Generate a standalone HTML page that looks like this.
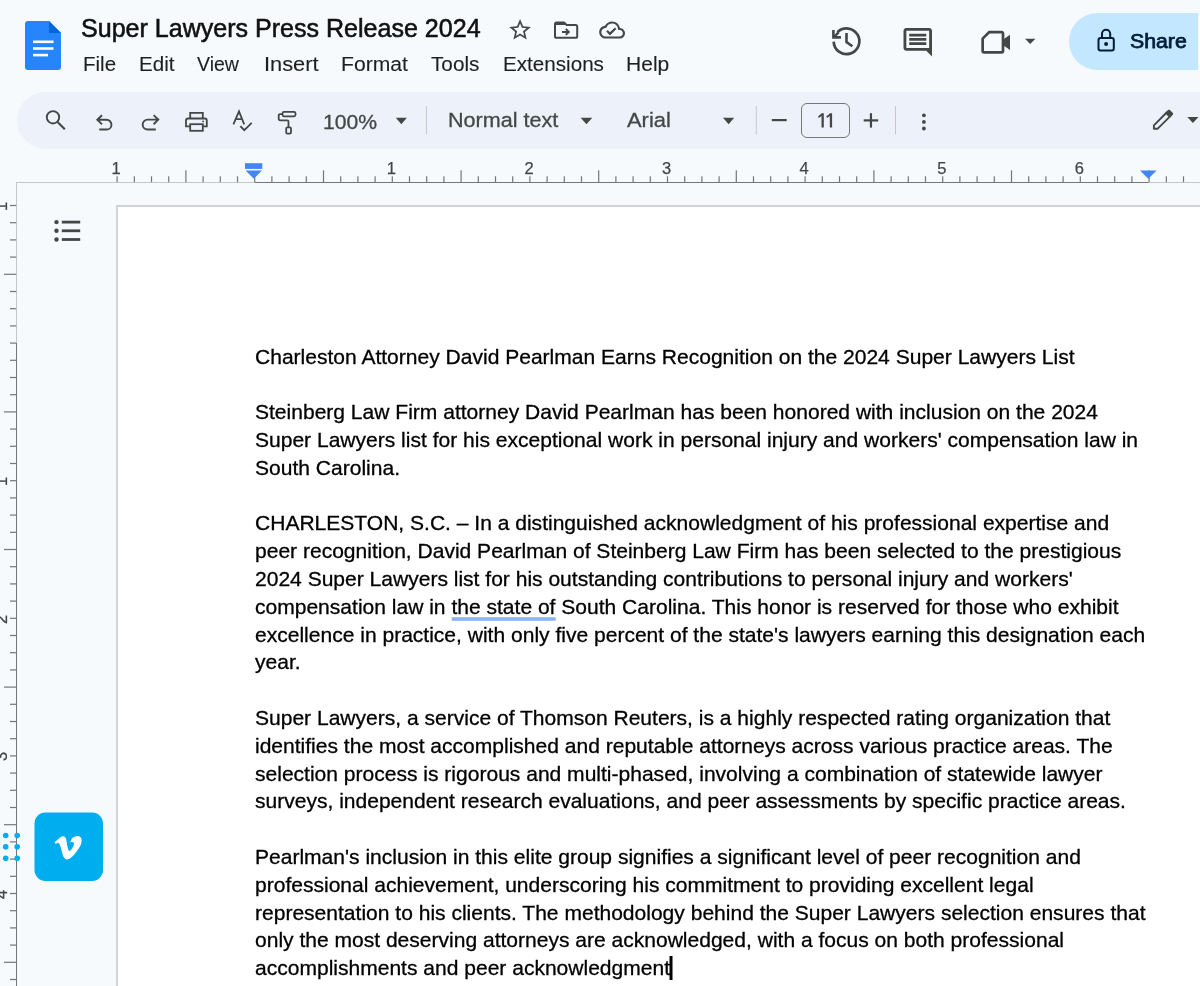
<!DOCTYPE html>
<html><head><meta charset="utf-8">
<style>
*{margin:0;padding:0;box-sizing:border-box}
html,body{width:1200px;height:986px;overflow:hidden;background:#f7fafd;font-family:"Liberation Sans",sans-serif}
#root{position:absolute;left:0;top:0;width:1200px;height:986px;will-change:transform}
.a{position:absolute}
.t{white-space:pre}
.ln{position:absolute;left:255px;font-size:21.04px;line-height:24px;color:#000;white-space:pre;-webkit-text-stroke:0.3px #000}
svg.ov{position:absolute;left:0;top:0}
</style></head><body><div id="root">

<div class="a" style="left:17px;top:92px;width:1400px;height:57px;background:#edf2fa;border-radius:28.5px"></div>
<div class="a" style="left:1069px;top:13px;width:129px;height:57px;background:#c2e7ff;border-radius:28.5px 0 0 28.5px"></div>
<div class="a" style="left:1198.5px;top:14px;width:4px;height:57px;background:#fff"></div>
<div class="a" style="left:116px;top:205px;width:1200px;height:900px;background:#fff;border:2px solid #d3d3d3"></div>
<div class="a t" style="left:80.90px;top:12.84px;font-size:25px;line-height:30px;color:#111;-webkit-text-stroke:0.55px #111;transform:scaleX(1.0019);transform-origin:0 0;">Super Lawyers Press Release 2024</div>
<div class="a t" style="left:82.85px;top:52.07px;font-size:20px;line-height:24px;color:#1f1f1f;-webkit-text-stroke:0.12px #1f1f1f;transform:scaleX(1.0278);transform-origin:0 0;">File</div>
<div class="a t" style="left:138.60px;top:52.07px;font-size:20px;line-height:24px;color:#1f1f1f;-webkit-text-stroke:0.12px #1f1f1f;transform:scaleX(1.0292);transform-origin:0 0;">Edit</div>
<div class="a t" style="left:197.10px;top:52.07px;font-size:20px;line-height:24px;color:#1f1f1f;-webkit-text-stroke:0.12px #1f1f1f;transform:scaleX(0.9754);transform-origin:0 0;">View</div>
<div class="a t" style="left:263.60px;top:52.07px;font-size:20px;line-height:24px;color:#1f1f1f;-webkit-text-stroke:0.12px #1f1f1f;transform:scaleX(1.0903);transform-origin:0 0;">Insert</div>
<div class="a t" style="left:340.80px;top:52.07px;font-size:20px;line-height:24px;color:#1f1f1f;-webkit-text-stroke:0.12px #1f1f1f;transform:scaleX(1.0558);transform-origin:0 0;">Format</div>
<div class="a t" style="left:430.60px;top:52.07px;font-size:20px;line-height:24px;color:#1f1f1f;-webkit-text-stroke:0.12px #1f1f1f;transform:scaleX(1.0358);transform-origin:0 0;">Tools</div>
<div class="a t" style="left:502.60px;top:52.07px;font-size:20px;line-height:24px;color:#1f1f1f;-webkit-text-stroke:0.12px #1f1f1f;transform:scaleX(1.0317);transform-origin:0 0;">Extensions</div>
<div class="a t" style="left:626.10px;top:52.07px;font-size:20px;line-height:24px;color:#1f1f1f;-webkit-text-stroke:0.12px #1f1f1f;transform:scaleX(1.0519);transform-origin:0 0;">Help</div>
<div class="a t" style="left:1130.10px;top:28.87px;font-size:20px;line-height:24px;color:#001d35;-webkit-text-stroke:0.75px #001d35;transform:scaleX(1.0641);transform-origin:0 0;">Share</div>
<div class="a t" style="left:323.20px;top:108.70px;font-size:20.5px;line-height:25px;color:#444746;-webkit-text-stroke:0.3px #444746;transform:scaleX(1.0320);transform-origin:0 0;">100%</div>
<div class="a t" style="left:447.90px;top:107.40px;font-size:20.5px;line-height:25px;color:#444746;-webkit-text-stroke:0.3px #444746;transform:scaleX(1.0527);transform-origin:0 0;">Normal text</div>
<div class="a t" style="left:626.90px;top:107.40px;font-size:20.5px;line-height:25px;color:#444746;-webkit-text-stroke:0.3px #444746;transform:scaleX(1.0692);transform-origin:0 0;">Arial</div>
<div class="a" style="left:801.3px;top:103px;width:49px;height:34.5px;border:1.8px solid #747775;border-radius:6px"></div>
<div class="ln" style="top:345px">Charleston Attorney David Pearlman Earns Recognition on the 2024 Super Lawyers List</div>
<div class="ln" style="top:400px">Steinberg Law Firm attorney David Pearlman has been honored with inclusion on the 2024</div>
<div class="ln" style="top:428px">Super Lawyers list for his exceptional work in personal injury and workers' compensation law in</div>
<div class="ln" style="top:456px">South Carolina.</div>
<div class="ln" style="top:511px">CHARLESTON, S.C. – In a distinguished acknowledgment of his professional expertise and</div>
<div class="ln" style="top:539px">peer recognition, David Pearlman of Steinberg Law Firm has been selected to the prestigious</div>
<div class="ln" style="top:567px">2024 Super Lawyers list for his outstanding contributions to personal injury and workers'</div>
<div class="ln" style="top:595px">compensation law in the state of South Carolina. This honor is reserved for those who exhibit</div>
<div class="ln" style="top:623px">excellence in practice, with only five percent of the state's lawyers earning this designation each</div>
<div class="ln" style="top:650px">year.</div>
<div class="ln" style="top:706px">Super Lawyers, a service of Thomson Reuters, is a highly respected rating organization that</div>
<div class="ln" style="top:734px">identifies the most accomplished and reputable attorneys across various practice areas. The</div>
<div class="ln" style="top:762px">selection process is rigorous and multi-phased, involving a combination of statewide lawyer</div>
<div class="ln" style="top:789px">surveys, independent research evaluations, and peer assessments by specific practice areas.</div>
<div class="ln" style="top:845px">Pearlman's inclusion in this elite group signifies a significant level of peer recognition and</div>
<div class="ln" style="top:873px">professional achievement, underscoring his commitment to providing excellent legal</div>
<div class="ln" style="top:901px">representation to his clients. The methodology behind the Super Lawyers selection ensures that</div>
<div class="ln" style="top:928px">only the most deserving attorneys are acknowledged, with a focus on both professional</div>
<div class="ln" style="top:956px">accomplishments and peer acknowledgment</div>
<svg class="ov" width="1200" height="986" viewBox="0 0 1200 986"><path d="M28 21H49L61 33V67A3 3 0 0 1 58 70H28A3 3 0 0 1 25 67V24A3 3 0 0 1 28 21Z" fill="#2684fc"/><path d="M49 21L61 33H49Z" fill="#0066da"/><rect x="33" y="40.5" width="20.5" height="2.6" fill="#fff"/><rect x="33" y="47.2" width="20.5" height="2.6" fill="#fff"/><rect x="33" y="53.8" width="15" height="2.6" fill="#fff"/><g transform="translate(507.1,16.9) scale(1.08)" fill="#444746"><path d="M22 9.24l-7.19-.62L12 2 9.19 8.63 2 9.24l5.46 4.73L5.82 21 12 17.27 18.18 21l-1.63-7.03L22 9.24zM12 15.4l-3.76 2.27 1-4.28-3.32-2.88 4.38-.38L12 6.1l1.71 4.04 4.38.38-3.32 2.88 1 4.28L12 15.4z"/></g><path d="M556.8 22.4h7.2l2.6 2.6h9c1 0 1.6.6 1.6 1.6v9.6c0 1-.6 1.6-1.6 1.6h-19c-1 0-1.6-.6-1.6-1.6v-12.2c0-1 .6-1.6 1.6-1.6z" fill="none" stroke="#444746" stroke-width="2"/><path d="M556 22.4h8l2.6 2.6H556z" fill="#444746"/><path d="M562 31.9h6.5M565.8 28.9l3 3-3 3" fill="none" stroke="#444746" stroke-width="2"/><g transform="translate(599.2,17.1) scale(1.075)" fill="#444746"><path d="M19.35 10.04C18.67 6.59 15.64 4 12 4 9.11 4 6.6 5.64 5.35 8.04 2.34 8.36 0 10.91 0 14c0 3.31 2.69 6 6 6h13c2.76 0 5-2.24 5-5 0-2.64-2.05-4.78-4.65-4.960zM19 18H6c-2.21 0-4-1.79-4-4 0-2.050 1.53-3.76 3.56-3.97l1.07-.11.5-.95C8.08 7.14 9.94 6 12 6c2.62 0 4.88 1.86 5.39 4.43l.3 1.5 1.53.11c1.56.1 2.78 1.41 2.78 2.96 0 1.65-1.35 3-3 3zm-9-3.82l-2.09-2.09L6.5 13.5 10 17l6.01-6.01-1.41-1.41z"/></g><path d="M833.7 41.6A12.85 12.85 0 1 0 837.46 32.21" fill="none" stroke="#444746" stroke-width="2.7"/><path d="M832.1 30H834.7V35.9H840.9V38.8H832.1Z" fill="#444746"/><path d="M833.6 37.4L838.6 32.4" stroke="#444746" stroke-width="2.6"/><path d="M846.5 33.1V42.1L852.4 46.3" fill="none" stroke="#444746" stroke-width="2.6"/><g transform="translate(900.65,25.15) scale(1.425)" fill="#444746"><path d="M21.99 4c0-1.1-.89-2-1.99-2H4c-1.1 0-2 .9-2 2v12c0 1.1.9 2 2 2h14l4 4-.01-18zM20 4v12H4V4h16zM6 12h12v2H6zm0-3h12v2H6zm0-3h12v2H6z"/></g><path d="M982.65 38.6L989.3 32.05H1001.6A1.4 1.4 0 0 1 1003 33.45V51A1.4 1.4 0 0 1 1001.6 52.4H984.05A1.4 1.4 0 0 1 982.65 51Z" fill="none" stroke="#444746" stroke-width="2.7" stroke-linejoin="round"/><path d="M1003.5 39.2L1010 34.7V50L1003.5 45.5Z" fill="#444746"/><path d="M1025 38.7H1035.4L1030.2 44Z" fill="#444746"/><rect x="1098.5" y="38" width="15.3" height="12.4" rx="2" fill="none" stroke="#001d35" stroke-width="2"/><path d="M1102 38V33.8A4.1 4.1 0 0 1 1110.2 33.8V38" fill="none" stroke="#001d35" stroke-width="2"/><circle cx="1106.1" cy="43.9" r="2" fill="#001d35"/><circle cx="53" cy="117.3" r="6.2" fill="none" stroke="#444746" stroke-width="1.9"/><path d="M57.6 122L64.8 129.3" stroke="#444746" stroke-width="2.1" fill="none"/><path d="M102 115.2L97.3 119.8L102 124.4M97.3 119.8H106.6A4.85 4.85 0 0 1 106.6 129.5H99.3" fill="none" stroke="#444746" stroke-width="1.9"/><path d="M153.6 115.1L158.3 119.6L153.6 124.2M158.3 119.6H147.6A4.95 4.95 0 0 0 147.6 129.5H155.8" fill="none" stroke="#444746" stroke-width="1.9"/><path d="M190.2 118V112.9H202.8V118" fill="none" stroke="#444746" stroke-width="1.8"/><path d="M190.2 126.4H186V120.5A2 2 0 0 1 188 118.5H204.8A2 2 0 0 1 206.8 120.5V126.4H202.8" fill="none" stroke="#444746" stroke-width="1.8"/><rect x="190.2" y="124.2" width="12.6" height="6.6" fill="none" stroke="#444746" stroke-width="1.8"/><circle cx="203.1" cy="121.4" r="0.9" fill="#444746"/><path d="M233.4 124.4L239 111.3L244.2 124.4M235.7 119.1H242.3" fill="none" stroke="#444746" stroke-width="1.8"/><path d="M240.3 126.2L244.3 130.2L251.7 122.8" fill="none" stroke="#444746" stroke-width="1.9"/><rect x="282.5" y="111.9" width="13" height="4.4" rx="1.5" fill="none" stroke="#444746" stroke-width="1.8"/><path d="M282.5 114.1H280A1.3 1.3 0 0 0 278.7 115.4V119A1.3 1.3 0 0 0 280 120.3H287.2A1.3 1.3 0 0 1 288.5 121.6V127" fill="none" stroke="#444746" stroke-width="1.8"/><rect x="286.2" y="127.3" width="4.8" height="6.4" rx="1.2" fill="none" stroke="#444746" stroke-width="1.8"/><path d="M395.8 117.7H406.9L401.35 124.3Z" fill="#444746"/><path d="M580.6 117.7H592.3L586.45 124.3Z" fill="#444746"/><path d="M723 117.7H734.2L728.6 124.3Z" fill="#444746"/><path d="M1187.3 117H1198.5L1192.9 123Z" fill="#444746"/><rect x="425.9" y="106" width="1" height="28.4" fill="#c7c7c7"/><rect x="755.8" y="106" width="1" height="28.4" fill="#c7c7c7"/><rect x="895.0" y="106" width="1" height="28.4" fill="#c7c7c7"/><rect x="771.8" y="119" width="14.9" height="2.2" fill="#444746"/><rect x="863.7" y="119.3" width="14.5" height="2.2" fill="#444746"/><rect x="869.85" y="113.2" width="2.2" height="14.4" fill="#444746"/><path d="M823.8 113.3V127.6H821.5V116.1L818.8 118.1L818.0 116.4L821.6999999999999 113.3Z" fill="#444746"/><path d="M832.1 113.3V127.6H829.8000000000001V116.1L827.1 118.1L826.3000000000001 116.4L830.0 113.3Z" fill="#444746"/><circle cx="923.9" cy="115.3" r="1.9" fill="#444746"/><circle cx="923.9" cy="121.9" r="1.9" fill="#444746"/><circle cx="923.9" cy="128.5" r="1.9" fill="#444746"/><path d="M1153.9 128.8V125.3L1166.2 113L1169.8 116.6L1157.5 128.8Z" fill="none" stroke="#444746" stroke-width="1.9" stroke-linejoin="round"/><path d="M1165.2 112.3L1168.2 109.9A1.3 1.3 0 0 1 1169.9 109.9L1172.9 112.9A1.3 1.3 0 0 1 1172.9 114.6L1170.5 117.6Z" fill="#444746"/><rect x="16" y="182" width="238.5" height="1" fill="#c4c7c5"/><rect x="254.5" y="182" width="894.3" height="1" fill="#747775"/><rect x="1148.8" y="182" width="60" height="1" fill="#c4c7c5"/><rect x="16" y="182" width="1" height="161" fill="#c4c7c5"/><rect x="16" y="343" width="1" height="700" fill="#747775"/><rect x="116.50" y="176.3" width="1.2" height="5.9" fill="#747775"/><rect x="133.70" y="176.3" width="1.2" height="5.9" fill="#747775"/><rect x="150.90" y="176.3" width="1.2" height="5.9" fill="#747775"/><rect x="168.10" y="176.3" width="1.2" height="5.9" fill="#747775"/><rect x="185.30" y="170.3" width="1.2" height="11.9" fill="#747775"/><rect x="202.50" y="176.3" width="1.2" height="5.9" fill="#747775"/><rect x="219.70" y="176.3" width="1.2" height="5.9" fill="#747775"/><rect x="236.90" y="176.3" width="1.2" height="5.9" fill="#747775"/><rect x="254.10" y="176.3" width="1.2" height="5.9" fill="#747775"/><rect x="271.30" y="176.3" width="1.2" height="5.9" fill="#747775"/><rect x="288.50" y="176.3" width="1.2" height="5.9" fill="#747775"/><rect x="305.70" y="176.3" width="1.2" height="5.9" fill="#747775"/><rect x="322.90" y="170.3" width="1.2" height="11.9" fill="#747775"/><rect x="340.10" y="176.3" width="1.2" height="5.9" fill="#747775"/><rect x="357.30" y="176.3" width="1.2" height="5.9" fill="#747775"/><rect x="374.50" y="176.3" width="1.2" height="5.9" fill="#747775"/><rect x="391.70" y="176.3" width="1.2" height="5.9" fill="#747775"/><rect x="408.90" y="176.3" width="1.2" height="5.9" fill="#747775"/><rect x="426.10" y="176.3" width="1.2" height="5.9" fill="#747775"/><rect x="443.30" y="176.3" width="1.2" height="5.9" fill="#747775"/><rect x="460.50" y="170.3" width="1.2" height="11.9" fill="#747775"/><rect x="477.70" y="176.3" width="1.2" height="5.9" fill="#747775"/><rect x="494.90" y="176.3" width="1.2" height="5.9" fill="#747775"/><rect x="512.10" y="176.3" width="1.2" height="5.9" fill="#747775"/><rect x="529.30" y="176.3" width="1.2" height="5.9" fill="#747775"/><rect x="546.50" y="176.3" width="1.2" height="5.9" fill="#747775"/><rect x="563.70" y="176.3" width="1.2" height="5.9" fill="#747775"/><rect x="580.90" y="176.3" width="1.2" height="5.9" fill="#747775"/><rect x="598.10" y="170.3" width="1.2" height="11.9" fill="#747775"/><rect x="615.30" y="176.3" width="1.2" height="5.9" fill="#747775"/><rect x="632.50" y="176.3" width="1.2" height="5.9" fill="#747775"/><rect x="649.70" y="176.3" width="1.2" height="5.9" fill="#747775"/><rect x="666.90" y="176.3" width="1.2" height="5.9" fill="#747775"/><rect x="684.10" y="176.3" width="1.2" height="5.9" fill="#747775"/><rect x="701.30" y="176.3" width="1.2" height="5.9" fill="#747775"/><rect x="718.50" y="176.3" width="1.2" height="5.9" fill="#747775"/><rect x="735.70" y="170.3" width="1.2" height="11.9" fill="#747775"/><rect x="752.90" y="176.3" width="1.2" height="5.9" fill="#747775"/><rect x="770.10" y="176.3" width="1.2" height="5.9" fill="#747775"/><rect x="787.30" y="176.3" width="1.2" height="5.9" fill="#747775"/><rect x="804.50" y="176.3" width="1.2" height="5.9" fill="#747775"/><rect x="821.70" y="176.3" width="1.2" height="5.9" fill="#747775"/><rect x="838.90" y="176.3" width="1.2" height="5.9" fill="#747775"/><rect x="856.10" y="176.3" width="1.2" height="5.9" fill="#747775"/><rect x="873.30" y="170.3" width="1.2" height="11.9" fill="#747775"/><rect x="890.50" y="176.3" width="1.2" height="5.9" fill="#747775"/><rect x="907.70" y="176.3" width="1.2" height="5.9" fill="#747775"/><rect x="924.90" y="176.3" width="1.2" height="5.9" fill="#747775"/><rect x="942.10" y="176.3" width="1.2" height="5.9" fill="#747775"/><rect x="959.30" y="176.3" width="1.2" height="5.9" fill="#747775"/><rect x="976.50" y="176.3" width="1.2" height="5.9" fill="#747775"/><rect x="993.70" y="176.3" width="1.2" height="5.9" fill="#747775"/><rect x="1010.90" y="170.3" width="1.2" height="11.9" fill="#747775"/><rect x="1028.10" y="176.3" width="1.2" height="5.9" fill="#747775"/><rect x="1045.30" y="176.3" width="1.2" height="5.9" fill="#747775"/><rect x="1062.50" y="176.3" width="1.2" height="5.9" fill="#747775"/><rect x="1079.70" y="176.3" width="1.2" height="5.9" fill="#747775"/><rect x="1096.90" y="176.3" width="1.2" height="5.9" fill="#747775"/><rect x="1114.10" y="176.3" width="1.2" height="5.9" fill="#747775"/><rect x="1131.30" y="176.3" width="1.2" height="5.9" fill="#747775"/><rect x="1148.50" y="170.3" width="1.2" height="11.9" fill="#747775"/><rect x="1165.70" y="176.3" width="1.2" height="5.9" fill="#747775"/><rect x="1182.90" y="176.3" width="1.2" height="5.9" fill="#747775"/><rect x="10" y="204.90" width="6.2" height="1.2" fill="#747775"/><rect x="10" y="222.10" width="6.2" height="1.2" fill="#747775"/><rect x="10" y="239.30" width="6.2" height="1.2" fill="#747775"/><rect x="10" y="256.50" width="6.2" height="1.2" fill="#747775"/><rect x="4" y="273.70" width="12.2" height="1.2" fill="#747775"/><rect x="10" y="290.90" width="6.2" height="1.2" fill="#747775"/><rect x="10" y="308.10" width="6.2" height="1.2" fill="#747775"/><rect x="10" y="325.30" width="6.2" height="1.2" fill="#747775"/><rect x="10" y="342.50" width="6.2" height="1.2" fill="#747775"/><rect x="10" y="359.70" width="6.2" height="1.2" fill="#747775"/><rect x="10" y="376.90" width="6.2" height="1.2" fill="#747775"/><rect x="10" y="394.10" width="6.2" height="1.2" fill="#747775"/><rect x="4" y="411.30" width="12.2" height="1.2" fill="#747775"/><rect x="10" y="428.50" width="6.2" height="1.2" fill="#747775"/><rect x="10" y="445.70" width="6.2" height="1.2" fill="#747775"/><rect x="10" y="462.90" width="6.2" height="1.2" fill="#747775"/><rect x="10" y="480.10" width="6.2" height="1.2" fill="#747775"/><rect x="10" y="497.30" width="6.2" height="1.2" fill="#747775"/><rect x="10" y="514.50" width="6.2" height="1.2" fill="#747775"/><rect x="10" y="531.70" width="6.2" height="1.2" fill="#747775"/><rect x="4" y="548.90" width="12.2" height="1.2" fill="#747775"/><rect x="10" y="566.10" width="6.2" height="1.2" fill="#747775"/><rect x="10" y="583.30" width="6.2" height="1.2" fill="#747775"/><rect x="10" y="600.50" width="6.2" height="1.2" fill="#747775"/><rect x="10" y="617.70" width="6.2" height="1.2" fill="#747775"/><rect x="10" y="634.90" width="6.2" height="1.2" fill="#747775"/><rect x="10" y="652.10" width="6.2" height="1.2" fill="#747775"/><rect x="10" y="669.30" width="6.2" height="1.2" fill="#747775"/><rect x="4" y="686.50" width="12.2" height="1.2" fill="#747775"/><rect x="10" y="703.70" width="6.2" height="1.2" fill="#747775"/><rect x="10" y="720.90" width="6.2" height="1.2" fill="#747775"/><rect x="10" y="738.10" width="6.2" height="1.2" fill="#747775"/><rect x="10" y="755.30" width="6.2" height="1.2" fill="#747775"/><rect x="10" y="772.50" width="6.2" height="1.2" fill="#747775"/><rect x="10" y="789.70" width="6.2" height="1.2" fill="#747775"/><rect x="10" y="806.90" width="6.2" height="1.2" fill="#747775"/><rect x="4" y="824.10" width="12.2" height="1.2" fill="#747775"/><rect x="10" y="841.30" width="6.2" height="1.2" fill="#747775"/><rect x="10" y="858.50" width="6.2" height="1.2" fill="#747775"/><rect x="10" y="875.70" width="6.2" height="1.2" fill="#747775"/><rect x="10" y="892.90" width="6.2" height="1.2" fill="#747775"/><rect x="10" y="910.10" width="6.2" height="1.2" fill="#747775"/><rect x="10" y="927.30" width="6.2" height="1.2" fill="#747775"/><rect x="10" y="944.50" width="6.2" height="1.2" fill="#747775"/><rect x="4" y="961.70" width="12.2" height="1.2" fill="#747775"/><rect x="10" y="978.90" width="6.2" height="1.2" fill="#747775"/><rect x="245" y="163.2" width="17.3" height="5.7" fill="#4285f4"/><path d="M245.6 170.5H262L253.8 178.8Z" fill="#4285f4"/><path d="M1140 170.4H1156.6L1148.3 178.7Z" fill="#4285f4"/><circle cx="56.5" cy="222.1" r="2.2" fill="#444746"/><rect x="61.8" y="220.7" width="18.4" height="2.8" fill="#444746"/><circle cx="56.5" cy="230.8" r="2.2" fill="#444746"/><rect x="61.8" y="229.4" width="18.4" height="2.8" fill="#444746"/><circle cx="56.5" cy="239.5" r="2.2" fill="#444746"/><rect x="61.8" y="238.1" width="18.4" height="2.8" fill="#444746"/><rect x="451.7" y="617.2" width="104" height="3.6" fill="#8ab4f8"/><rect x="669.5" y="956" width="3" height="24" fill="#000"/><rect x="34.5" y="812.5" width="68.5" height="68.5" rx="11" fill="#00adef"/><g transform="translate(54.6,834.2) scale(1.125)" fill="#fff"><path d="M23.9765 6.4168c-.105 2.338-1.739 5.5429-4.894 9.6088-3.2679 4.247-6.0258 6.3699-8.2898 6.3699-1.409 0-2.578-1.294-3.553-3.881l-1.9179-7.1138c-.719-2.584-1.488-3.878-2.312-3.878-.179 0-.806.378-1.8809 1.132L0 7.2058c1.1909-1.042 2.3589-2.0799 3.5179-3.1169 1.5899-1.3769 2.7699-2.0999 3.5599-2.1699 1.8729-.177 3.0258 1.1029 3.4609 3.8418.4699 2.9559.7959 4.7958.9789 5.5158.5389 2.4558 1.1359 3.6828 1.7929 3.6828.5029 0 1.2609-.7949 2.2699-2.3879 1.0109-1.5899 1.5519-2.8008 1.6229-3.6318.1439-1.3739-.3979-2.0669-1.6229-2.0669-.5769 0-1.1719.1309-1.7879.3959 1.1869-3.8859 3.4559-5.7769 6.8069-5.6689 2.4719.0719 3.6378 1.6819 3.4929 4.8328z"/></g><circle cx="5.7" cy="835.5" r="2.8" fill="#00adef"/><circle cx="5.7" cy="846.8" r="2.8" fill="#00adef"/><circle cx="5.7" cy="858.3" r="2.8" fill="#00adef"/><circle cx="17.2" cy="835.5" r="2.8" fill="#00adef"/><circle cx="17.2" cy="846.8" r="2.8" fill="#00adef"/><circle cx="17.2" cy="858.3" r="2.8" fill="#00adef"/></svg>
<div class="a t" style="left:106.20px;top:158.6px;width:20px;text-align:center;font-size:16.5px;line-height:19px;color:#444746;-webkit-text-stroke:0.25px #444746">1</div>
<div class="a t" style="left:381.40px;top:158.6px;width:20px;text-align:center;font-size:16.5px;line-height:19px;color:#444746;-webkit-text-stroke:0.25px #444746">1</div>
<div class="a t" style="left:519.00px;top:158.6px;width:20px;text-align:center;font-size:16.5px;line-height:19px;color:#444746;-webkit-text-stroke:0.25px #444746">2</div>
<div class="a t" style="left:656.60px;top:158.6px;width:20px;text-align:center;font-size:16.5px;line-height:19px;color:#444746;-webkit-text-stroke:0.25px #444746">3</div>
<div class="a t" style="left:794.20px;top:158.6px;width:20px;text-align:center;font-size:16.5px;line-height:19px;color:#444746;-webkit-text-stroke:0.25px #444746">4</div>
<div class="a t" style="left:931.80px;top:158.6px;width:20px;text-align:center;font-size:16.5px;line-height:19px;color:#444746;-webkit-text-stroke:0.25px #444746">5</div>
<div class="a t" style="left:1069.40px;top:158.6px;width:20px;text-align:center;font-size:16.5px;line-height:19px;color:#444746;-webkit-text-stroke:0.25px #444746">6</div>
<div class="a t" style="left:-9.5px;top:197.00px;width:20px;height:19px;text-align:center;font-size:16.5px;line-height:19px;color:#444746;-webkit-text-stroke:0.25px #444746;transform:rotate(-90deg)">1</div>
<div class="a t" style="left:-9.5px;top:472.16px;width:20px;height:19px;text-align:center;font-size:16.5px;line-height:19px;color:#444746;-webkit-text-stroke:0.25px #444746;transform:rotate(-90deg)">1</div>
<div class="a t" style="left:-9.5px;top:609.74px;width:20px;height:19px;text-align:center;font-size:16.5px;line-height:19px;color:#444746;-webkit-text-stroke:0.25px #444746;transform:rotate(-90deg)">2</div>
<div class="a t" style="left:-9.5px;top:747.32px;width:20px;height:19px;text-align:center;font-size:16.5px;line-height:19px;color:#444746;-webkit-text-stroke:0.25px #444746;transform:rotate(-90deg)">3</div>
<div class="a t" style="left:-9.5px;top:884.90px;width:20px;height:19px;text-align:center;font-size:16.5px;line-height:19px;color:#444746;-webkit-text-stroke:0.25px #444746;transform:rotate(-90deg)">4</div>
</div></body></html>
